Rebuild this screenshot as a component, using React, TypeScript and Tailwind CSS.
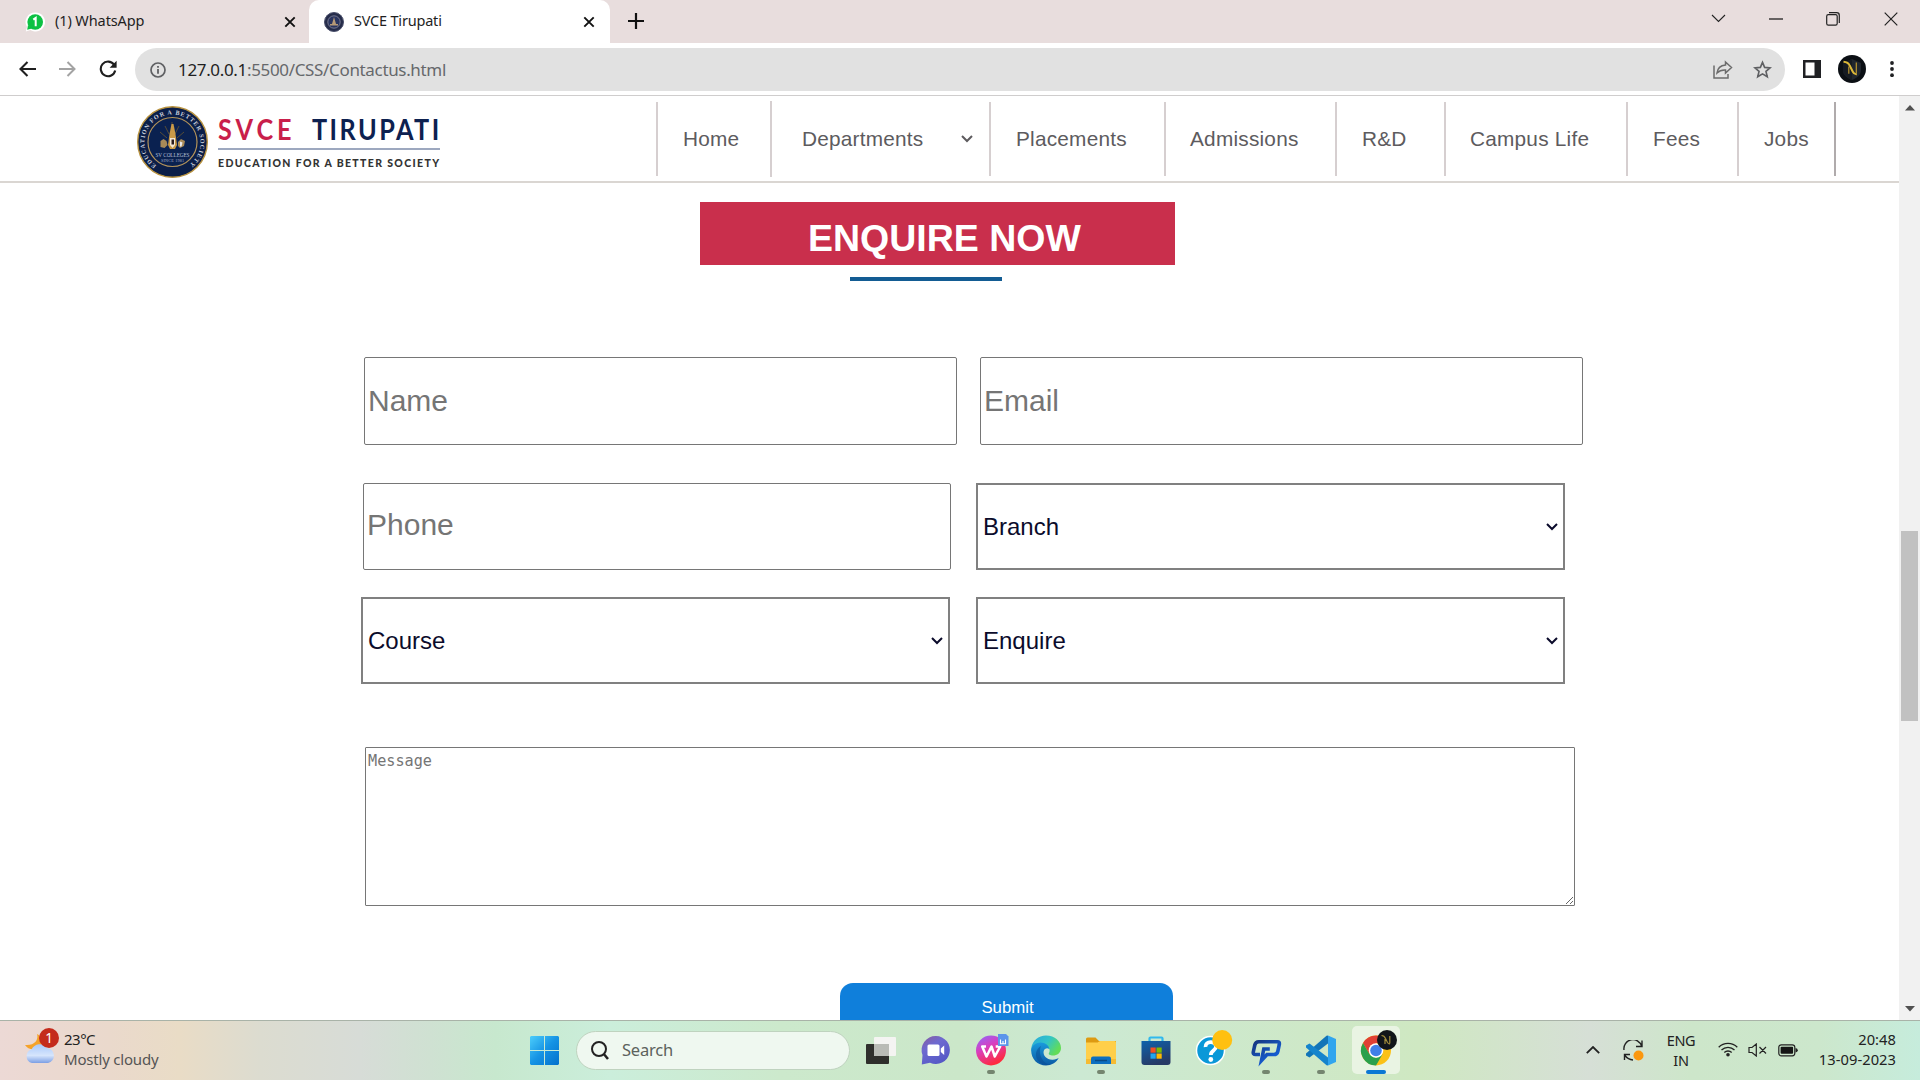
import React from "react";

const UI = "font-['Noto_Sans',sans-serif]";

function CrestArt() {
  return (
    <svg width="71" height="72" viewBox="0 0 71 72" className="shrink-0">
      <defs>
        <path id="ring" d="M19.5 59.5 A28 28 0 1 1 52 59" />
      </defs>
      <ellipse cx="35.5" cy="36" rx="34.8" ry="35.2" fill="#0b1e48" stroke="#b8923f" strokeWidth="1.4" />
      <circle cx="35.5" cy="36" r="24.5" fill="#0a2150" stroke="#b3935a" strokeWidth="1.2" />
      <text fill="#ccd0dc" fontSize="6.2" fontFamily="Liberation Serif, serif" fontWeight="bold">
        <textPath href="#ring" textLength="140" lengthAdjust="spacing">EDUCATION FOR A BETTER SOCIETY</textPath>
      </text>
      <g stroke="#6b5830" strokeWidth="0.8">
        <path d="M35 16v10M28 20l4 8M42 20l-4 8M23 26l7 6M47 26l-7 6" />
      </g>
      <path d="M34.500 18h2l1 5 1 5 1.500 11-2 4h-5l-2-4 1.500-11 1-5z" fill="#c99a48" />
      <path d="M33 32h5v7l-2.500 3-2.500-3z" fill="#f3e7d6" />
      <path d="M34.500 33.500h2.500v5h-2.500z" fill="#2a1b1b" />
      <path d="M23.500 35l3-2 3 2 1 4-3 3-4-1zM41 36l3-3 4 2-1 5-4 2-2-2z" fill="#a88a58" />
      <path d="M43 35.500l2.500 1-1 4-1.500 0z" fill="#e9e9ee" />
      <text x="35.500" y="50.500" textAnchor="middle" fill="#b9c0d4" fontSize="5.200" fontFamily="Liberation Serif, serif" textLength="34">SV COLLEGES</text>
      <text x="35.500" y="56" textAnchor="middle" fill="#a9b0c6" fontSize="4.200" fontFamily="Liberation Serif, serif" textLength="23">SINCE 1981</text>
    </svg>
  );
}

function Close() {
  return (
    <svg width="12" height="12" viewBox="0 0 12 12" stroke="#111" strokeWidth="1.900" className="shrink-0">
      <path d="M1.300 1.300l9.400 9.400M10.700 1.300l-9.400 9.400" />
    </svg>
  );
}

function NBadge({ size }: { size: number }) {
  return (
    <svg width={size} height={size} viewBox="0 0 28 28">
      <circle cx="14" cy="14" r="14" fill="#0b0f14" />
      <path d="M14 4l9 4v7c0 5-4 8-9 10-5-2-9-5-9-10V8z" fill="#20262e" />
      <path d="M14 4v21c-5-2-9-5-9-10V8z" fill="#161b22" />
      <path d="M5.500 6.800c4 .2 5.300 1.500 6.300 4l3 6c1 2 2 2.600 4 2.400" fill="none" stroke="#dcb838" strokeWidth="2" />
      <path d="M10.800 18.800V11.500M18.300 18.500V7.500" stroke="#b8952f" strokeWidth="1.200" />
    </svg>
  );
}

function TabBar() {
  return (
    <div className={`flex h-[43px] bg-[#e8dddd] text-[14.5px] text-[#1f1f1f] ${UI}`}>
      <div className="flex w-[309px] items-center pl-[25px] pr-[13px]">
        <svg width="20" height="20" viewBox="0 0 20 20" className="shrink-0">
          <path d="M10 .5A9.500 9.500 0 1 1 5.500 18L.8 19.500 2 15A9.500 9.500 0 0 1 10 .5z" fill="#fff" />
          <circle cx="10.200" cy="10" r="7.800" fill="#0cc143" />
          <path d="M3 13l-.8 4.800L7 16.500z" fill="#0cc143" />
          <path d="M8.300 7.600l2.400-1.700v8.400" fill="none" stroke="#fff" strokeWidth="2" />
        </svg>
        <span className="ml-[10px] mt-[-2px] flex-1 tracking-[-0.1px]">(1) WhatsApp</span>
        <Close />
      </div>
      <div className="flex w-[301px] items-center rounded-t-[10px] bg-white pl-[15px] pr-[15px]">
        <svg width="20" height="20" viewBox="0 0 20 20" className="shrink-0">
          <circle cx="10" cy="10" r="9.500" fill="#252c4a" stroke="#4b506b" />
          <circle cx="10" cy="10" r="6.200" fill="#2a3560" stroke="#8c8ba0" strokeWidth=".8" />
          <path d="M10 5l2 7H8zM6 12h8v1.500H6z" fill="#b79a77" />
        </svg>
        <span className="ml-[10px] mt-[-2px] flex-1 tracking-[-0.2px]">SVCE Tirupati</span>
        <Close />
      </div>
      <div className="flex flex-1 items-center pl-[18px] pb-px">
        <svg width="16" height="16" viewBox="0 0 16 16" stroke="#111" strokeWidth="2.200">
          <path d="M8 0v16M0 8h16" />
        </svg>
      </div>
      <div className="flex items-center pb-[6px] pr-[22px]">
        <svg width="15" height="9" viewBox="0 0 15 9" fill="none" stroke="#222" strokeWidth="1.100">
          <path d="M1 1l6.500 6.500L14 1" />
        </svg>
        <svg width="14" height="2" viewBox="0 0 14 2" className="ml-[43px]">
          <path d="M0 1h14" stroke="#111" strokeWidth="1.200" />
        </svg>
        <svg width="14" height="14" viewBox="0 0 14 14" className="ml-[43px]" fill="none" stroke="#222" strokeWidth="1.200">
          <rect x=".7" y="2.600" width="10.500" height="10.500" rx="1.600" />
          <path d="M3 .7h7.600q2.700 0 2.700 2.700V11" />
        </svg>
        <svg width="14" height="14" viewBox="0 0 14 14" className="ml-[44px]" stroke="#222" strokeWidth="1.200">
          <path d="M.7.7l12.600 12.600M13.300.7L.7 13.300" />
        </svg>
      </div>
    </div>
  );
}

function Toolbar() {
  return (
    <div className="flex h-[53px] items-center border-b border-[#cfcdcd] bg-white">
      <svg width="17" height="16" viewBox="0 0 17 16" className="ml-[19px]" fill="none" stroke="#1f1f1f" strokeWidth="2.100">
        <path d="M17 8H1.500M8.500 1l-7 7 7 7" />
      </svg>
      <svg width="17" height="16" viewBox="0 0 17 16" className="ml-[23px]" fill="none" stroke="#a3a3a3" strokeWidth="2">
        <path d="M0 8h15.500M8.500 1l7 7-7 7" />
      </svg>
      <svg width="18" height="18" viewBox="0 0 18 18" className="ml-[23px]" fill="none" stroke="#1f1f1f" strokeWidth="2.100">
        <path d="M15 4.600A7.300 7.300 0 1 0 16.200 10.500" />
        <path d="M17.600.8v7h-7z" fill="#1f1f1f" stroke="none" />
      </svg>
      <div className="ml-[18px] mt-px flex h-[43px] w-[1650px] items-center rounded-full bg-[#e1e1e1] pl-[15px] pr-[13px]">
        <svg width="16" height="16" viewBox="0 0 16 16" fill="none" stroke="#5f6063" strokeWidth="1.700">
          <circle cx="8" cy="8" r="7" />
          <path d="M8 7v4.800M8 3.900v1.800" strokeWidth="1.800" />
        </svg>
        <span className={`ml-[12px] flex-1 text-[17px] tracking-[-0.34px] text-[#66686b] ${UI}`}>
          <span className="text-[#1f1f1f]">127.0.0.1</span>:5500/CSS/Contactus.html
        </span>
        <svg width="20" height="19" viewBox="0 0 20 19" className="mr-px" fill="none" stroke="#6b6b6b" strokeWidth="1.500">
          <path d="M1 5.500V18h14v-4" />
          <path d="M12.500 2l6 5.500-6 5.500v-3c-4-.2-6.500 1-8.500 3 .5-4.500 3-7.500 8.500-8z" />
        </svg>
        <svg width="19" height="19" viewBox="0 0 24 24" className="ml-[19px]" fill="none" stroke="#5f6063" strokeWidth="2.100">
          <path d="M12 3l2.700 6.300 6.900.6-5.200 4.500 1.600 6.700L12 17.500l-6 3.600 1.600-6.700L2.400 9.900l6.900-.6z" />
        </svg>
      </div>
      <svg width="18" height="18" viewBox="0 0 18 18" className="ml-[18px]">
        <path d="M0 0h18v18H0zM2.500 2.500v13h9v-13z" fill="#202124" fillRule="evenodd" />
      </svg>
      <div className="ml-[17px]"><NBadge size={28} /></div>
      <svg width="4" height="16" viewBox="0 0 4 16" fill="#202124" className="ml-[24px]">
        <circle cx="2" cy="2" r="1.900" /><circle cx="2" cy="8" r="1.900" /><circle cx="2" cy="14.200" r="1.900" />
      </svg>
    </div>
  );
}

function Chevron({ color = "#0b0b2b" }: { color?: string }) {
  return (
    <svg width="12" height="8" viewBox="0 0 12 8" fill="none" stroke={color} strokeWidth="2" className="shrink-0">
      <path d="M1 1l5 5 5-5" />
    </svg>
  );
}

const cell = "flex h-[74px] items-center border-l-2 border-[#d6cfd0] whitespace-nowrap";

function SiteHeader() {
  return (
    <header className="flex h-[87px] items-start border-b-2 border-[#dad6d2]">
      <div className="flex w-[656px] pl-[137px] pt-[10px]">
        <CrestArt />
        <div className="ml-[10px] mt-[8px] w-[222px]">
          <div className="flex h-[30px] w-[255px] origin-left scale-x-[0.87] justify-between text-[29px] font-bold leading-[30px] font-['Lato',sans-serif]">
            <span className="tracking-[4.6px] text-[#c91f4b]">SVCE</span>
            <span className="mr-[-2px] tracking-[2.8px] text-[#0d2150]">TIRUPATI</span>
          </div>
          <div className="mt-[4px] h-[2px] bg-[#9da8bf]" />
          <div className="mt-[6px] whitespace-nowrap text-[10.5px] font-black leading-[14px] tracking-[1.36px] text-[#333] font-['Lato',sans-serif]">EDUCATION FOR A BETTER SOCIETY</div>
        </div>
      </div>
      <nav className="mt-[6px] flex items-start text-[20.8px] tracking-[0.22px] text-[#5d5b5e] font-['Liberation_Sans',Arial,sans-serif]">
        <a className={`${cell} w-[114px] pl-[25px]`}>Home</a>
        <a className="mt-[-1px] flex h-[76px] w-[219px] items-center justify-between border-l-2 border-[#d6cfd0] pl-[30px] pr-[16px]">
          Departments <Chevron color="#5d5b5e" />
        </a>
        <a className={`${cell} w-[175px] pl-[25px]`}>Placements</a>
        <a className={`${cell} w-[171px] pl-[24px]`}>Admissions</a>
        <a className={`${cell} w-[109px] pl-[25px]`}>R&amp;D</a>
        <a className={`${cell} w-[182px] pl-[24px]`}>Campus Life</a>
        <a className={`${cell} w-[111px] pl-[25px]`}>Fees</a>
        <a className={`${cell} w-[99px] border-r-2 border-r-[#b0abac] pl-[25px]`}>Jobs</a>
      </nav>
    </header>
  );
}

function TextField({ label, box }: { label: string; box: string }) {
  return (
    <input
      placeholder={label}
      className={`${box} rounded-[2px] border border-[#767676] bg-white pl-[3px] text-[30px] placeholder:text-[#757575] placeholder:opacity-100`}
    />
  );
}

function SelectField({ label, box }: { label: string; box: string }) {
  return (
    <div className={`${box} flex h-[87px] w-[589px] items-center justify-between border-2 border-[#808080] bg-white pl-[5px] pr-[5px] text-[24px] text-[#0b0b2b]`}>
      {label}
      <Chevron />
    </div>
  );
}

function Page() {
  return (
    <div className="flex h-[924px] overflow-hidden bg-white">
      <div className="w-[1899px] overflow-hidden">
        <SiteHeader />
        <main className="font-['Liberation_Sans',Arial,sans-serif]">
          <h1 className="ml-[700px] mt-[19px] h-[63px] w-[475px] bg-[#c92f4c] pl-[108px] pt-[5px] text-[37.5px] font-bold leading-[63px] text-white">ENQUIRE NOW</h1>
          <div className="ml-[850px] mt-[12px] h-[4px] w-[152px] bg-[#135c93]" />
          <form className="mt-[76px] pl-[361px]">
            <div className="flex">
              <TextField label="Name" box="ml-[3px] h-[88px] w-[593px]" />
              <TextField label="Email" box="ml-[23px] h-[88px] w-[603px]" />
            </div>
            <div className="mt-[38px] flex">
              <TextField label="Phone" box="ml-[2px] h-[87px] w-[588px] pb-[3px]" />
              <SelectField label="Branch" box="ml-[25px]" />
            </div>
            <div className="mt-[27px] flex">
              <SelectField label="Course" box="" />
              <SelectField label="Enquire" box="ml-[26px]" />
            </div>
            <textarea
              placeholder="Message"
              className="ml-[4px] mt-[63px] block h-[159px] w-[1210px] resize rounded-[1px] border border-[#767676] px-[2px] py-[3px] text-[15.2px] leading-[20px] font-['DejaVu_Sans_Mono',monospace] placeholder:text-[#757575] placeholder:opacity-100"
            />
            <button type="button" className="ml-[479px] mt-[77px] block h-[50px] w-[333px] rounded-[13px] bg-[#0f7fdb] pl-[2px] text-[16.8px] text-white">Submit</button>
          </form>
        </main>
      </div>
      <div className="flex w-[21px] flex-col items-center bg-[#f1f1f1]">
        <svg width="10" height="6" viewBox="0 0 10 6" className="mt-[9px]"><path d="M5 0l5 5.500H0z" fill="#505050" /></svg>
        <div className="mt-[420px] h-[190px] w-[17px] bg-[#c1c1c1]" />
        <div className="flex-1" />
        <svg width="10" height="6" viewBox="0 0 10 6" className="mb-[8px]"><path d="M5 5.500L0 0h10z" fill="#505050" /></svg>
      </div>
    </div>
  );
}

function TaskApp({ children, mark = "" }: { children: React.ReactNode; mark?: string }) {
  return (
    <div className="flex h-[59px] w-[55px] flex-col items-center pt-[12px]">
      <svg width="36" height="34" viewBox="-3 -2 36 34" className="shrink-0 overflow-visible">{children}</svg>
      <div className={`mt-[3px] h-[4px] rounded-full ${mark}`} />
    </div>
  );
}

const idle = "w-[8px] bg-[#74856f]";

function TaskApps() {
  return (
    <div className="flex">
      <TaskApp>
        <rect x="0" y="9" width="23" height="20" rx="1" fill="#2f2f2c" />
        <rect x="8" y="2" width="22" height="19" rx="1" fill="#f4f4f2" />
        <path d="M8 9h15v12H9q-1 0-1-1z" fill="#b9bbb6" />
      </TaskApp>
      <TaskApp>
        <defs><linearGradient id="chat" x1="0" y1="0" x2=".6" y2="1"><stop offset="0" stopColor="#8a5a9c" /><stop offset=".4" stopColor="#6e6ad0" /><stop offset="1" stopColor="#5558c6" /></linearGradient></defs>
        <path d="M15 1a14 14 0 1 1-6 26.700L.8 29.500 1.500 20A14 14 0 0 1 15 1z" fill="url(#chat)" />
        <rect x="6.500" y="9.500" width="12" height="11.500" rx="1.500" fill="#fff" />
        <path d="M19.800 13.500l3.400-3v9.500l-3.400-3z" fill="#fff" />
      </TaskApp>
      <TaskApp mark={idle}>
        <defs><linearGradient id="wps" x1="0" y1="0" x2=".5" y2="1"><stop offset="0" stopColor="#8a6bff" /><stop offset=".45" stopColor="#d83fc0" /><stop offset="1" stopColor="#ff2a3d" /></linearGradient></defs>
        <circle cx="15" cy="15.500" r="15" fill="url(#wps)" />
        <path d="M10 11.500H6.200L10.500 21.500 15.500 11.500l3.300 10L24.200 11.500h-4.500" fill="none" stroke="#fff" strokeWidth="2.500" strokeLinejoin="round" />
        <path d="M22-1h8l2.500 2.500V11h-10.500z" fill="#5c95ea" />
        <path d="M24.500 4.500v4.200h5V4.500M27 6v2.500" fill="none" stroke="#fff" strokeWidth="1.100" />
      </TaskApp>
      <TaskApp>
        <defs>
          <linearGradient id="e1" x1="0" y1="0" x2="1" y2=".5"><stop offset="0" stopColor="#2aa7dc" /><stop offset=".55" stopColor="#31c4c8" /><stop offset="1" stopColor="#62dc58" /></linearGradient>
          <linearGradient id="e2" x1="0" y1="0" x2="0" y2="1"><stop offset="0" stopColor="#1a9bdc" /><stop offset="1" stopColor="#0c59a4" /></linearGradient>
        </defs>
        <path d="M.3 13C1.500 5.500 7.500.5 15 .5c9 0 15 6 15 12.500 0 5-4 7.500-8 7.500-3 0-5-1-4-2.500 2-3-.5-7.500-6-7.500C6 10.500 1.500 12.500.3 17z" fill="url(#e1)" />
        <path d="M.2 15C1 10.500 5 7.600 9.500 7.600c5 0 8.700 3 8.700 6.400-1.500-1.600-4.700-1-5.500 2-1.100 4.500 3.300 9 9 8.700 2.800-.1 4.800-1 6-1.700C25 27.700 20.500 30.500 15 30.500 6.500 30.500 0 24 .2 15z" fill="url(#e2)" />
        <path d="M10 11c-3.500 8 2 18 9 18.500C12 31.500 4 26 5 18.500c.3-3 2-6 5-7.500z" fill="#0b4c94" opacity=".55" />
      </TaskApp>
      <TaskApp mark={idle}>
        <path d="M0 4q0-1.500 1.500-1.500H9.500L13 6h17v5H0z" fill="#dd9a12" />
        <path d="M0 7.500h11.500L14 6h14.500Q30 6 30 7.500V29H0z" fill="#ffcf4a" />
        <path d="M0 24h30v5H0z" fill="#f6bb33" />
        <path d="M5 29v-5.500Q5 21.500 7 21.500h16q2 0 2 2V29z" fill="#0d6fc0" />
        <path d="M9 25.500h12" stroke="#0a4a85" strokeWidth="1.500" />
      </TaskApp>
      <TaskApp>
        <defs><linearGradient id="store" x1="0" y1="0" x2=".4" y2="1"><stop offset="0" stopColor="#0e62ac" /><stop offset="1" stopColor="#273a66" /></linearGradient></defs>
        <path d="M8.500 7V3.500q0-1 1-1h11q1 0 1 1V7" fill="none" stroke="#31b9ee" strokeWidth="2.200" />
        <path d="M.5 6h29v21q0 3-3 3h-23q-3 0-3-3z" fill="url(#store)" />
        <path d="M9.500 12.500h5.200v5.200H9.500z" fill="#f25022" /><path d="M15.500 12.500h5.200v5.200h-5.200z" fill="#7fba00" />
        <path d="M9.500 18.500h5.200v5.200H9.500z" fill="#20a5ef" /><path d="M15.500 18.500h5.200v5.200h-5.200z" fill="#ffb900" />
      </TaskApp>
      <TaskApp>
        <circle cx="14.500" cy="15.500" r="14" fill="#0a98d8" stroke="#fff" strokeWidth="1.500" />
        <path d="M9.500 12c-.5-6.500 10.500-6.500 10.500-.5 0 4.200-5.200 3.800-5.200 8.500" fill="none" stroke="#fff" strokeWidth="3.800" />
        <circle cx="14.800" cy="24.500" r="2.400" fill="#fff" />
        <circle cx="26.200" cy="5" r="10" fill="#ffc010" />
      </TaskApp>
      <TaskApp mark={idle}>
        <defs><linearGradient id="bub" x1="0" y1="0" x2="1" y2="1"><stop offset="0" stopColor="#17357f" /><stop offset="1" stopColor="#1467e6" /></linearGradient></defs>
        <path d="M9 19.500H4.500Q1.800 19.500 2.300 17l1.500-7q.7-3.300 4-3.300h18.500q2.500 0 2 2.800l-1.500 7q-.7 3-4 3H16L10.500 25.500l2.300-11.500h6" fill="none" stroke="url(#bub)" strokeWidth="3.600" />
      </TaskApp>
      <TaskApp mark={idle}>
        <path d="M22 .5v8L3.500 22.500 0 20.500v-2L20.500.8z" fill="#1275b8" />
        <path d="M22 30.500v-8L3.500 8.500 0 10.500v2L20.500 30.200z" fill="#1584cc" />
        <path d="M22 .5L30 4v23l-8 3.500z" fill="#31a5ee" />
      </TaskApp>
      <div className="ml-[4px] mt-[5px] flex h-[48px] w-[48px] flex-col items-center rounded-[5px] bg-[#e9f4e3] pt-[7px]">
        <svg width="36" height="34" viewBox="-3 -2 36 34" className="shrink-0 overflow-visible">
          <circle cx="15" cy="15.500" r="15" fill="#fbc116" />
          <path d="M2 8A15 15 0 0 1 28 8H15l-6.500 11.300z" fill="#df4034" />
          <path d="M2 8A15 15 0 0 0 15 30.500l6.500-11.200L15 23 8.500 19.300z" fill="#2aa04b" />
          <circle cx="15" cy="15.500" r="7.300" fill="#fff" /><circle cx="15" cy="15.500" r="5.800" fill="#3f7fe8" />
          <circle cx="26" cy="5" r="10" fill="#11151a" />
          <path d="M20.500.5c2.500 0 3.200 1 4 3l2 4c.8 1.400 1.300 1.600 2.500 1.500M24 9V4M28.800 8.500V1" fill="none" stroke="#a48e3c" strokeWidth="1.200" />
        </svg>
        <div className="mt-[3px] h-[4px] w-[20px] rounded-full bg-[#0b78d4]" />
      </div>
    </div>
  );
}

function Taskbar() {
  return (
    <div className={`flex h-[60px] border-t border-[#a9b3a8] bg-[linear-gradient(90deg,#ecd9d5_0px,#ead9cc_110px,#e9dcc6_180px,#dcdcd0_260px,#d7dcd7_360px,#cfe1d2_430px,#c7e8ce_495px,#cbeedb_610px,#cce9cc_780px,#cbe7c9_960px,#cce9d3_1080px,#cfe8c2_1420px,#d6dfd6_1590px,#cde6ca_1690px,#cce7cc_1820px,#c6ecdc_1920px)] text-[#222] ${UI}`}>
      <div className="flex w-[530px] pl-[25px] pt-[7px]">
        <svg width="36" height="38" viewBox="0 0 36 38" className="shrink-0">
          <defs><linearGradient id="cloud" x1="0" y1="0" x2="0" y2="1"><stop offset="0" stopColor="#a9c9fb" /><stop offset=".6" stopColor="#d6e5fc" /><stop offset="1" stopColor="#7c9fe4" /></linearGradient></defs>
          <path d="M12 6c2 6-3 12-12 11 3 5 11 6 15 1s2-10-3-12z" fill="#f5a32a" />
          <path d="M7 35a7 7 0 0 1-.5-13.500A9 9 0 0 1 22 20a7.600 7.600 0 0 1 1 15z" fill="url(#cloud)" />
          <circle cx="24" cy="10" r="10" fill="#c42b1c" />
          <text x="24" y="15" textAnchor="middle" fill="#fff" fontSize="13.500" fontFamily="Noto Sans">1</text>
        </svg>
        <div className="ml-[3px] text-[15px] leading-[20px]">
          <div className="mt-px tracking-[-0.5px]">23°C</div>
          <div className="tracking-[-0.2px] text-[#555]">Mostly cloudy</div>
        </div>
      </div>
      <svg width="29" height="29" viewBox="0 0 29 29" className="mt-[15px] shrink-0">
        <defs><linearGradient id="win" x1="0" y1="0" x2="1" y2="1"><stop offset="0" stopColor="#4ccdfb" /><stop offset=".5" stopColor="#1593e4" /><stop offset="1" stopColor="#0371cc" /></linearGradient></defs>
        <path d="M1 0h13v14H0V1zM15 0h13l1 1v13H15zM0 15h14v14H1l-1-1zM15 15h14v13l-1 1H15z" fill="url(#win)" />
      </svg>
      <div className="ml-[17px] mt-[10px] flex h-[39px] w-[274px] shrink-0 items-center rounded-full border border-[#bfd3bf] bg-[#eff8f0] pl-[14px]">
        <svg width="18" height="19" viewBox="0 0 18 19" fill="none" stroke="#222" strokeWidth="2">
          <circle cx="8" cy="8" r="7" /><path d="M12.800 13l4.200 5" strokeWidth="2.500" />
        </svg>
        <span className="ml-[13px] text-[16.5px] tracking-[-0.2px] text-[#5c625c]">Search</span>
      </div>
      <div className="ml-[3px] w-[730px] shrink-0"><TaskApps /></div>
      <svg width="14" height="8" viewBox="0 0 14 8" className="ml-[3px] mt-[25px]" fill="none" stroke="#222" strokeWidth="1.800"><path d="M.8 7.200L7 1l6.200 6.200" /></svg>
      <svg width="21" height="21" viewBox="0 0 21 21" className="ml-[23px] mt-[19px]" fill="none" stroke="#222" strokeWidth="1.400">
        <path d="M1 10A9 9 0 0 1 18.500 6M19 .5V6.500H13M1.500 20v-5.500h5.500M2 15.500Q5 19.500 10 20" />
        <circle cx="15.500" cy="15.500" r="5" fill="#fb970f" stroke="none" />
      </svg>
      <div className="ml-[14px] mt-[9px] w-[46px] text-center text-[14.5px] leading-[20px] tracking-[-0.3px]">ENG<br />IN</div>
      <svg width="20" height="16" viewBox="0 0 20 16" className="ml-[14px] mt-[20px]" fill="none" stroke="#222" strokeWidth="1.300">
        <path d="M.7 6.200a13 13 0 0 1 18.600 0M3.500 9a9.200 9.200 0 0 1 13 0M6.300 11.500a5.300 5.300 0 0 1 7.400 0" /><circle cx="10" cy="13.700" r="1.800" fill="#222" stroke="none" />
      </svg>
      <svg width="20" height="14" viewBox="0 0 20 14" className="ml-[10px] mt-[22px]" fill="none" stroke="#222" strokeWidth="1.200">
        <path d="M1 4.500h3L8.300 1v12L4 9.500H1zM11.500 4l6.500 6.500M18 4l-6.500 6.500" />
      </svg>
      <svg width="20" height="13" viewBox="0 0 20 13" className="ml-[10px] mt-[23px]">
        <rect x=".8" y=".8" width="16" height="11" rx="2.500" fill="none" stroke="#222" strokeWidth="1.200" />
        <rect x="2.600" y="2.800" width="12.500" height="7" rx="1" fill="#151515" /><path d="M17.500 4q2.300.5 2.300 2.300T17.500 8.600z" fill="#222" />
      </svg>
      <div className="flex-1 pr-[24px] pt-[8px] text-right text-[14.7px] leading-[20px] tracking-[0.05px]">20:48<br />13-09-2023</div>
    </div>
  );
}

export default function App() {
  return (
    <div className="h-[1080px] w-[1920px] overflow-hidden bg-white">
      <TabBar />
      <Toolbar />
      <Page />
      <Taskbar />
    </div>
  );
}
